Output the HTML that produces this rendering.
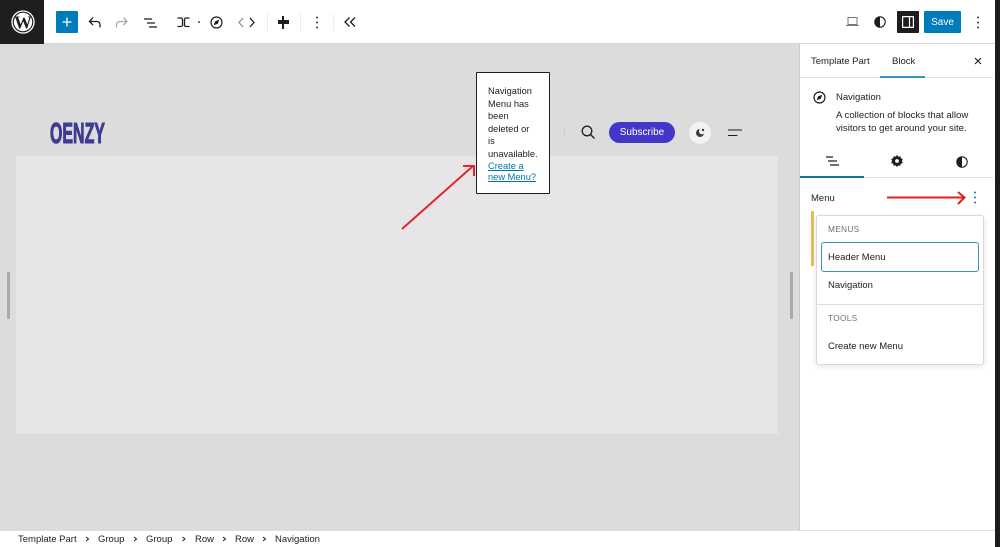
<!DOCTYPE html>
<html><head><meta charset="utf-8">
<style>
html,body{margin:0;padding:0;width:1000px;height:547px;overflow:hidden;background:#fff;font-family:"Liberation Sans",sans-serif;color:#1e1e1e}
.a{position:absolute}
.t{position:absolute;font-size:9.5px;line-height:12px;white-space:nowrap;color:#1e1e1e}
svg{position:absolute;overflow:visible}
</style></head><body>
<!-- canvas -->
<div class="a" style="left:0;top:44px;width:799px;height:486px;background:#dcdcdc"></div>
<div class="a" style="left:16px;top:156px;width:762px;height:278px;background:#e7e5e8"></div>
<div class="a" style="left:7px;top:272px;width:3px;height:47px;background:#a9a9a9;border-radius:2px"></div>
<div class="a" style="left:790px;top:272px;width:3px;height:47px;background:#a9a9a9;border-radius:2px"></div>
<!-- top bar -->
<div class="a" style="left:0;top:0;width:1000px;height:44px;background:#fff;border-bottom:1px solid #d6d6d6;box-sizing:border-box"></div>
<div class="a" style="left:0;top:0;width:44px;height:44px;background:#1e1e1e"></div>
<svg style="left:11px;top:10px" width="24" height="24" viewBox="0 0 24 24"><circle cx="12" cy="12" r="11" fill="none" stroke="#fff" stroke-width="1.300"/><circle cx="12" cy="12" r="9.200" fill="#fff"/><text x="12" y="18.500" text-anchor="middle" font-family="Liberation Serif,serif" font-weight="700" font-size="18" fill="#1e1e1e">W</text></svg>
<div class="a" style="left:56px;top:11px;width:22px;height:22px;background:#007cba;border-radius:1px"></div>
<svg style="left:56px;top:11px" width="22" height="22"><path d="M11 6.500v9M6.500 11h9" stroke="#fff" stroke-width="1.300"/></svg>
<svg style="left:88px;top:16px" width="14" height="14" fill="none" stroke="#1e1e1e" stroke-width="1.300"><path d="M12 11.500V8.500a3 3 0 0 0-3-3H1.500M5 1.500 1.500 5.500 5 9"/></svg>
<svg style="left:115px;top:16px" width="14" height="14" fill="none" stroke="#a9a9a9" stroke-width="1.300"><path d="M1.500 11.500V8.500a3 3 0 0 1 3-3H12M8.500 1.500 12 5.500 8.500 9"/></svg>
<svg style="left:143px;top:17px" width="14" height="12" stroke="#1e1e1e" stroke-width="1.300"><path d="M1 2h8M4 6h8M6 10h8"/></svg>
<svg style="left:177px;top:17px" width="13" height="11" fill="none" stroke="#1e1e1e" stroke-width="1.300"><path d="M.5 1h3.500a1.500 1.500 0 0 1 1.500 1.500v5A1.500 1.500 0 0 1 4 9.500H.5M12.500 1H9a1.500 1.500 0 0 0-1.500 1.500v5A1.500 1.500 0 0 0 9 9.500h3.500"/></svg>
<div class="a" style="left:198px;top:21px;width:2px;height:2px;background:#444;border-radius:50%"></div>
<svg style="left:210px;top:16px" width="13" height="13" fill="none" stroke="#1e1e1e" stroke-width="1.200"><circle cx="6.500" cy="6.500" r="5.500"/><path d="M9.300 3.700 7.800 7.800 3.700 9.300 5.200 5.200z" fill="#1e1e1e" stroke="none"/></svg>
<svg style="left:238px;top:17px" width="17" height="11" fill="none" stroke-width="1.300"><path d="M5 1 1 5.500 5 10" stroke="#949494"/><path d="M12 1l4 4.500-4 4.500" stroke="#1e1e1e"/></svg>
<div class="a" style="left:267px;top:14px;width:1px;height:17px;background:#ececec"></div>
<div class="a" style="left:300px;top:14px;width:1px;height:17px;background:#ececec"></div>
<div class="a" style="left:333px;top:14px;width:1px;height:17px;background:#ececec"></div>
<div class="a" style="left:278px;top:20px;width:11px;height:4px;background:#1e1e1e"></div>
<div class="a" style="left:282px;top:16px;width:2px;height:13px;background:#1e1e1e"></div>
<svg style="left:315px;top:16px" width="4" height="13" fill="#333"><circle cx="2" cy="1.500" r="1"/><circle cx="2" cy="6.500" r="1"/><circle cx="2" cy="11.500" r="1"/></svg>
<svg style="left:344px;top:17px" width="12" height="10" fill="none" stroke="#1e1e1e" stroke-width="1.300"><path d="M5.500 .5 1 5l4.500 4.500M11 .5 6.500 5l4.500 4.500"/></svg>
<svg style="left:846px;top:17px" width="13" height="10" fill="none" stroke="#777" stroke-width="1"><path d="M2 .5h9v7H2zM0 8.500h13"/></svg>
<svg style="left:874px;top:16px" width="12" height="12"><circle cx="6" cy="6" r="5.200" fill="#fff" stroke="#1e1e1e" stroke-width="1.100"/><path d="M6 .8a5.200 5.200 0 0 0 0 10.400z" fill="#1e1e1e"/></svg>
<div class="a" style="left:897px;top:11px;width:22px;height:22px;background:#1e1e1e;border-radius:1px"></div>
<svg style="left:902px;top:16px" width="12" height="12" fill="none" stroke="#fff" stroke-width="1.200"><path d="M.6.600h10.800v10.800H.6zM7.500.6v10.800"/></svg>
<div class="a" style="left:924px;top:11px;width:37px;height:22px;background:#007cba;border-radius:1px"></div>
<div class="t" style="left:924px;top:16.500px;width:37px;text-align:center;color:#fff;font-size:10px">Save</div>
<svg style="left:976px;top:16px" width="4" height="13" fill="#333"><circle cx="2" cy="1.500" r="1"/><circle cx="2" cy="6.500" r="1"/><circle cx="2" cy="11.500" r="1"/></svg>
<!-- header content -->
<div class="a" style="left:50px;top:119px;font-family:'Liberation Sans',sans-serif;font-weight:700;font-size:29px;line-height:30px;color:#3f3a94;transform:scaleX(.55);transform-origin:0 0;white-space:nowrap;-webkit-text-stroke:1.100px #3f3a94">OENZY</div>
<div class="a" style="left:564px;top:127px;width:1px;height:11px;background:#cfcfcf"></div>
<svg style="left:581px;top:125px" width="14" height="14" fill="none" stroke="#1e1e1e" stroke-width="1.300"><circle cx="6" cy="6" r="4.800"/><path d="M9.500 9.500 13.500 13.500"/></svg>
<div class="a" style="left:609px;top:122px;width:66px;height:21px;border-radius:11px;background:#4337c9"></div>
<div class="t" style="left:609px;top:126.500px;width:66px;text-align:center;color:#fff;font-size:10px">Subscribe</div>
<div class="a" style="left:689px;top:122px;width:22px;height:22px;border-radius:50%;background:#f2f2f2"></div>
<svg style="left:695px;top:128px" width="10" height="10"><path d="M5 1a4 4 0 1 0 4 4.500A3 3 0 0 1 5 1z" fill="#3b3b48"/><circle cx="8" cy="2" r="1.200" fill="#3b3b48"/></svg>
<svg style="left:728px;top:129px" width="14" height="8" stroke="#1e1e1e" stroke-width="1.100"><path d="M0 1h14M0 6.500h9.500"/></svg>
<!-- notice -->
<div class="a" style="left:476px;top:72px;width:74px;height:122px;box-sizing:border-box;background:#fff;border:1px solid #1e1e1e;border-radius:1px"></div>
<div class="a" style="left:488px;top:85px;font-size:9.300px;line-height:12.600px;color:#1e1e1e;white-space:nowrap">Navigation<br>Menu has<br>been<br>deleted or<br>is<br>unavailable.</div>
<div class="a" style="left:488px;top:161px;font-size:9.300px;line-height:11px;color:#0073aa;text-decoration:underline;white-space:nowrap">Create a<br>new Menu?</div>
<svg style="left:0;top:0" width="1000" height="547" fill="none" stroke="#e32626" stroke-width="2"><path d="M402 229 473 166M463 166H474V176"/></svg>
<!-- sidebar -->
<div class="a" style="left:799px;top:44px;width:201px;height:486px;background:#fff;border-left:1px solid #c9c9c9;box-sizing:border-box"></div>
<div class="a" style="left:800px;top:77px;width:193px;height:1px;background:#e0e0e0"></div>
<div class="t" style="left:811px;top:56px">Template Part</div>
<div class="t" style="left:892px;top:56px">Block</div>
<div class="a" style="left:880px;top:76px;width:45px;height:2px;background:#3a92c4"></div>
<svg style="left:974px;top:57px" width="8" height="8" stroke="#1e1e1e" stroke-width="1.100"><path d="M1 1l6 6M7 1 1 7"/></svg>
<svg style="left:813px;top:91px" width="13" height="13" fill="none" stroke="#1e1e1e" stroke-width="1.200"><circle cx="6.500" cy="6.500" r="5.500"/><path d="M9.300 3.700 7.800 7.800 3.700 9.300 5.200 5.200z" fill="#1e1e1e" stroke="none"/></svg>
<div class="t" style="left:836px;top:92px">Navigation</div>
<div class="t" style="left:836px;top:109px;line-height:13px;font-size:9.600px">A collection of blocks that allow<br>visitors to get around your site.</div>
<svg style="left:825px;top:156px" width="14" height="11" stroke="#1e1e1e" stroke-width="1.200"><path d="M1 1h7M3 5h9M5 9h9"/></svg>
<svg style="left:891px;top:155px" width="12" height="12"><path d="M6 0l1.300 1.600 2-.4.600 2 1.900.8-.8 2 .8 2-1.900.8-.6 2-2-.4L6 12l-1.300-1.600-2 .4-.6-2L.2 8l.8-2-.8-2 1.900-.8.600-2 2 .4z" fill="#1e1e1e"/><circle cx="6" cy="6" r="1.900" fill="#fff"/></svg>
<svg style="left:956px;top:156px" width="12" height="12"><circle cx="6" cy="6" r="5.200" fill="#fff" stroke="#1e1e1e" stroke-width="1.100"/><path d="M6 .8a5.200 5.200 0 0 0 0 10.400z" fill="#1e1e1e"/></svg>
<div class="a" style="left:800px;top:177px;width:193px;height:1px;background:#e0e0e0"></div>
<div class="a" style="left:800px;top:176px;width:64px;height:2px;background:#1173ac"></div>
<div class="t" style="left:811px;top:192.500px">Menu</div>
<svg style="left:0;top:0" width="1000" height="547" fill="none" stroke="#e02020" stroke-width="2"><path d="M887 197.500H964M958 192 964.500 197.500 958 204"/></svg>
<svg style="left:973px;top:191px" width="4" height="13" fill="#1173ac"><circle cx="2" cy="1.500" r="1"/><circle cx="2" cy="6.500" r="1"/><circle cx="2" cy="11.500" r="1"/></svg>
<div class="a" style="left:811px;top:211px;width:3px;height:55px;background:#e6bd5a"></div>
<div class="a" style="left:816px;top:215px;width:168px;height:150px;box-sizing:border-box;background:#fff;border:1px solid #d9d9d9;border-radius:3px;box-shadow:0 2px 6px rgba(0,0,0,.1)"></div>
<div class="t" style="left:828px;top:223px;font-size:8.300px;color:#6f6f6f;letter-spacing:.3px">MENUS</div>
<div class="a" style="left:821px;top:242px;width:158px;height:30px;box-sizing:border-box;border:1.500px solid #3a8fc0;border-radius:3px"></div>
<div class="t" style="left:828px;top:251.500px">Header Menu</div>
<div class="t" style="left:828px;top:279.500px">Navigation</div>
<div class="a" style="left:817px;top:304px;width:166px;height:1px;background:#dedede"></div>
<div class="t" style="left:828px;top:312px;font-size:8.300px;color:#6f6f6f;letter-spacing:.3px">TOOLS</div>
<div class="t" style="left:828px;top:340.500px">Create new Menu</div>
<!-- breadcrumb -->
<div class="a" style="left:0;top:530px;width:1000px;height:17px;background:#fff;border-top:1px solid #e0e0e0;box-sizing:border-box"></div>
<div class="t" style="left:18px;top:533.500px">Template Part</div>
<div class="t" style="left:98px;top:533.500px">Group</div>
<div class="t" style="left:146px;top:533.500px">Group</div>
<div class="t" style="left:195px;top:533.500px">Row</div>
<div class="t" style="left:235px;top:533.500px">Row</div>
<div class="t" style="left:275px;top:533.500px">Navigation</div>
<svg style="left:0;top:0" width="1000" height="547" fill="none" stroke="#1e1e1e" stroke-width="1"><path d="M86 537l2.500 2-2.500 2M134 537l2.500 2-2.500 2M182.500 537l2.500 2-2.500 2M223 537l2.500 2-2.500 2M263 537l2.500 2-2.500 2"/></svg>
<!-- right edge strip -->
<div class="a" style="left:995px;top:0;width:5px;height:547px;background:#1c1c1c"></div>
</body></html>
